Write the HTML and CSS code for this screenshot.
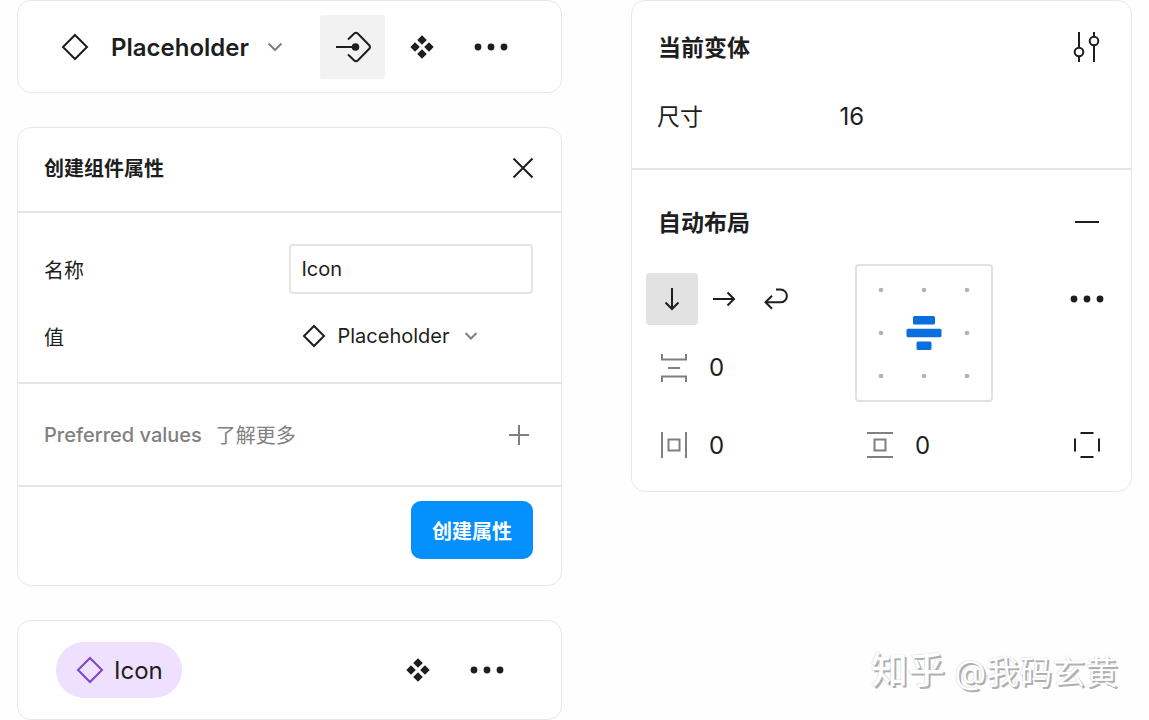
FILE: index.html
```html
<!DOCTYPE html>
<html lang="zh-CN">
<head>
    <title>创建组件属性</title>
    <meta charset="UTF-8">
    <link rel="stylesheet" href="styles.css">
</head>
<body>

    <div class="page">
        <div class="column">
            <div class="card toolbar">
                <svg class="icon" width="28" height="28" viewBox="0 0 28 28"><path d="M14 2 26 14 14 26 2 14z"/></svg>
                <select class="layer-name" aria-label="Layer">
                    <option>Placeholder</option>
                </select>
                <svg class="chevron" width="16" height="10" viewBox="0 0 16 10"><path d="M1.500 1.500 8 8 14.500 1.500"/></svg>
                <div class="tools">
                    <button class="tool active" aria-label="创建属性">
                        <svg class="icon" width="36" height="32" viewBox="0 0 36 32"><path d="M1 16h19"/><path d="M13 8.500 19 2.700q2-1.900 4 0L34 14q2 2 0 4L23 29.300q-2 1.900-4 0L13 23.500"/><circle class="fill" cx="20.500" cy="16" r="3.800"/></svg>
                    </button>
                    <button class="tool" aria-label="组件">
                        <svg class="solid" width="24" height="24" viewBox="0 0 24 24"><path d="M12 .3 16.800 5 12 9.800 7.200 5zM5 7.200 9.800 12 5 16.800.3 12zM19 7.200 23.700 12 19 16.800 14.200 12zM12 14.200 16.800 19 12 23.700 7.200 19z"/></svg>
                    </button>
                    <button class="tool" aria-label="更多">
                        <svg class="solid" width="34" height="8" viewBox="0 0 34 8"><circle cx="4" cy="4" r="3.400"/><circle cx="17" cy="4" r="3.400"/><circle cx="30" cy="4" r="3.400"/></svg>
                    </button>
                </div>
            </div>

            <div class="card dialog">
                <div class="dialog-header">
                    <h2>创建组件属性</h2>
                    <button class="small-button" aria-label="关闭">
                        <svg class="icon" width="22" height="22" viewBox="0 0 22 22"><path d="M1.500 1.500 20.500 20.500M20.500 1.500 1.500 20.500"/></svg>
                    </button>
                </div>
                <div class="dialog-form">
                    <label for="name">名称</label>
                    <input type="text" id="name" class="name-input" value="Icon">
                    <label for="value">值</label>
                    <div class="value-picker">
                        <svg class="icon" width="24" height="24" viewBox="0 0 24 24"><path d="M12 2 22 12 12 22 2 12z"/></svg>
                        <select id="value">
                            <option>Placeholder</option>
                        </select>
                        <svg class="chevron" width="14" height="10" viewBox="0 0 14 10"><path d="M1.500 2 7 7.500 12.500 2"/></svg>
                    </div>
                </div>
                <div class="preferred">
                    <span class="preferred-title">Preferred values</span>
                    <a href="#">了解更多</a>
                    <button class="small-button" aria-label="添加">
                        <svg class="icon muted" width="22" height="22" viewBox="0 0 22 22"><path d="M11 1v20M1 11h20"/></svg>
                    </button>
                </div>
                <div class="dialog-footer">
                    <button class="primary">创建属性</button>
                </div>
            </div>

            <div class="card instance">
                <button class="chip">
                    <svg class="icon" width="28" height="28" viewBox="0 0 28 28"><path d="M14 2 26 14 14 26 2 14z"/></svg>
                    Icon
                </button>
                <div class="tools">
                    <button class="tool" aria-label="组件">
                        <svg class="solid" width="24" height="24" viewBox="0 0 24 24"><path d="M12 .3 16.800 5 12 9.800 7.200 5zM5 7.200 9.800 12 5 16.800.3 12zM19 7.200 23.700 12 19 16.800 14.200 12zM12 14.200 16.800 19 12 23.700 7.200 19z"/></svg>
                    </button>
                    <button class="tool" aria-label="更多">
                        <svg class="solid" width="34" height="8" viewBox="0 0 34 8"><circle cx="4" cy="4" r="3.400"/><circle cx="17" cy="4" r="3.400"/><circle cx="30" cy="4" r="3.400"/></svg>
                    </button>
                </div>
            </div>
        </div>

        <div class="column">
            <div class="card inspector">
                <div class="variant">
                    <div class="section-header">
                        <h2>当前变体</h2>
                        <button class="cell-button" aria-label="设置">
                            <svg class="icon" width="28" height="32" viewBox="0 0 28 32"><path d="M6 1v15.500M6 25.500V31M21 1v4.500M21 14.500V31"/><circle cx="6" cy="21" r="4.300"/><circle cx="21" cy="10" r="4.300"/></svg>
                        </button>
                    </div>
                    <div class="size-row">
                        <label for="size">尺寸</label>
                        <select id="size">
                            <option>16</option>
                        </select>
                    </div>
                </div>
                <div class="auto-layout">
                    <div class="section-header">
                        <h2>自动布局</h2>
                        <button class="cell-button" aria-label="移除">
                            <svg class="icon" width="26" height="4" viewBox="0 0 26 4"><path d="M1 2h24"/></svg>
                        </button>
                    </div>
                    <div class="layout-grid">
                        <div class="directions">
                            <button class="cell-button selected" aria-label="垂直">
                                <svg class="icon" width="24" height="24" viewBox="0 0 24 24"><path d="M12 1v21M5.500 15.500 12 22l6.500-6.500"/></svg>
                            </button>
                            <button class="cell-button" aria-label="水平">
                                <svg class="icon" width="24" height="24" viewBox="0 0 24 24"><path d="M1 12h21M15.500 5.500 22 12l-6.500 6.500"/></svg>
                            </button>
                            <button class="cell-button" aria-label="换行">
                                <svg class="icon" width="24" height="24" viewBox="0 0 24 24"><path d="M12 2.500h4.500a6.300 6.300 0 0 1 0 12.800H1.500M8 8.800 1.500 15.300 8 21.800"/></svg>
                            </button>
                        </div>
                        <!-- alignment picker -->
                        <button class="matrix" aria-label="对齐">
                            <svg viewBox="0 0 134 134">
                                <g fill="#b3b3b3">
                                    <circle cx="24" cy="24" r="2.300"/><circle cx="67" cy="24" r="2.300"/><circle cx="110" cy="24" r="2.300"/>
                                    <circle cx="24" cy="67" r="2.300"/><circle cx="110" cy="67" r="2.300"/>
                                    <circle cx="24" cy="110" r="2.300"/><circle cx="67" cy="110" r="2.300"/><circle cx="110" cy="110" r="2.300"/>
                                </g>
                                <g fill="#0a6fdc">
                                    <rect x="56" y="50" width="22" height="8.500" rx="1.500"/>
                                    <rect x="49.500" y="62.700" width="35" height="8.500" rx="1.500"/>
                                    <rect x="59.500" y="75.500" width="15" height="8.500" rx="1.500"/>
                                </g>
                            </svg>
                        </button>
                        <button class="cell-button" aria-label="更多">
                            <svg class="solid" width="34" height="8" viewBox="0 0 34 8"><circle cx="4" cy="4" r="3.400"/><circle cx="17" cy="4" r="3.400"/><circle cx="30" cy="4" r="3.400"/></svg>
                        </button>
                        <div class="field first">
                            <label for="gap" aria-label="间距">
                                <svg class="icon muted" width="28" height="30" viewBox="0 0 28 30"><path d="M2 1v5.500h24V1M2 29v-5.500h24V29M8 15h12"/></svg>
                            </label>
                            <input type="text" id="gap" value="0">
                        </div>
                        <div class="field first">
                            <label for="padx" aria-label="水平内边距">
                                <svg class="icon muted" width="28" height="28" viewBox="0 0 28 28"><path d="M2 1v26M26 1v26M8.500 8.500h11v11h-11z"/></svg>
                            </label>
                            <input type="text" id="padx" value="0">
                        </div>
                        <div class="field">
                            <label for="pady" aria-label="垂直内边距">
                                <svg class="icon muted" width="28" height="28" viewBox="0 0 28 28"><path d="M1 2h26M1 26h26M8.500 8.500h11v11h-11z"/></svg>
                            </label>
                            <input type="text" id="pady" value="0">
                        </div>
                        <button class="cell-button" aria-label="独立内边距">
                            <svg class="icon" width="28" height="28" viewBox="0 0 28 28"><path d="M7.500 2h13M7.500 26h13M2 7.500v13M26 7.500v13"/></svg>
                        </button>
                    </div>
                </div>
            </div>
            <p class="credit"><span class="site">知乎</span> @我码玄黄</p>
        </div>
    </div>

</body>
</html>
```
FILE: styles.css
```css
* {
    box-sizing: border-box;
}
body {
    margin: 0;
    background: #fefefe;
    color: #1e1e1e;
    font-family: Inter, "Noto Sans CJK SC", sans-serif;
    font-size: 20px;
}
h2, p {
    margin: 0;
}
h2 {
    font-size: inherit;
    font-weight: 700;
}
button, input, select {
    font: inherit;
    color: inherit;
    background: none;
    border: none;
    padding: 0;
    margin: 0;
}
button {
    display: flex;
    align-items: center;
    justify-content: center;
    cursor: pointer;
}
select {
    appearance: none;
}
svg {
    display: block;
    flex: none;
}
.page {
    display: grid;
    grid-template-columns: 545fr 501fr;
    gap: 69px;
    padding: 0 17px;
}
.column {
    display: flex;
    flex-direction: column;
    gap: 34px;
}
.card {
    background: #fff;
    border: 1px solid #e8e8e8;
    border-radius: 14px;
}
.icon {
    fill: none;
    stroke: #1e1e1e;
    stroke-width: 2;
}
.icon .fill, .solid {
    fill: #1e1e1e;
    stroke: none;
}
.icon.muted {
    stroke: #808080;
}
.chevron {
    fill: none;
    stroke: #808080;
    stroke-width: 2;
}

/* top toolbar and instance row */
.toolbar, .instance {
    display: flex;
    align-items: center;
}
.toolbar {
    padding: 14px 38px 13px 43px;
}
.layer-name {
    font-size: 24px;
    font-weight: 600;
    margin: 0 18px 0 22px;
}
.tools {
    display: flex;
    gap: 4px;
    margin-left: auto;
}
.tool {
    width: 65px;
    height: 64px;
    border-radius: 3px;
}
.active {
    background: #f2f2f2;
}
.instance {
    padding: 17px 42px 17px 38px;
}
.chip {
    gap: 10px;
    height: 56px;
    padding: 0 19px 0 20px;
    border-radius: 28px;
    background: #eee0fe;
    font-size: 24px;
}
.chip .icon {
    stroke: #7b45cf;
}

/* property dialog */
.dialog-header, .dialog-form, .preferred {
    border-bottom: 2px solid #e5e5e5;
}
.dialog-header {
    display: flex;
    align-items: center;
    justify-content: space-between;
    height: 85px;
    padding: 0 27px 4px 26px;
}
.dialog-form {
    display: grid;
    grid-template-columns: 1fr 1fr;
    grid-template-rows: 50px 34px;
    row-gap: 25px;
    align-items: center;
    padding: 31px 28px 29px 26px;
}
.name-input {
    width: 100%;
    height: 50px;
    padding: 0 11px;
    border: 2px solid #e5e5e5;
    border-radius: 4px;
}
.value-picker {
    display: flex;
    align-items: center;
    padding-left: 13px;
}
.value-picker select {
    margin: 0 13px 0 12px;
}
.preferred {
    display: flex;
    align-items: center;
    gap: 14px;
    height: 103px;
    padding: 0 31px 0 26px;
    color: #808080;
}
.preferred-title {
    font-weight: 500;
}
.preferred a {
    color: inherit;
    text-decoration: none;
}
.preferred button {
    margin-left: auto;
}
.dialog-footer {
    display: flex;
    justify-content: flex-end;
    padding: 14px 28px 26px;
}
.primary {
    height: 58px;
    padding: 0 21px;
    border-radius: 10px;
    background: #0490fc;
    color: #fff;
    font-weight: 700;
}

/* inspector */
.inspector {
    font-size: 23px;
    padding-bottom: 3px;
}
.inspector h2, .size-row label {
    padding-bottom: 3px;
}
.variant {
    border-bottom: 2px solid #e5e5e5;
    padding: 10px 18px 18px 14px;
}
.section-header {
    display: flex;
    align-items: center;
    justify-content: space-between;
    height: 72px;
    padding-left: 12px;
}
.size-row {
    display: grid;
    grid-template-columns: 182fr 273fr;
    align-items: center;
    height: 67px;
    padding-left: 11px;
}
.inspector select, .inspector input {
    font-size: 24px;
    width: 60px;
}
.auto-layout {
    padding: 16px 18px 0 14px;
}
.auto-layout .section-header {
    margin-bottom: 6px;
}
.layout-grid {
    display: grid;
    grid-template-columns: 209fr 206fr 52px;
    grid-template-rows: 69px 69px 86px;
    align-items: center;
}
.directions {
    display: flex;
}
.cell-button {
    width: 52px;
    height: 52px;
    border-radius: 4px;
}
.selected {
    background: #e2e2e2;
}
.matrix {
    grid-row: span 2;
    width: 138px;
    height: 138px;
    border: 2px solid #e2e2e2;
    border-radius: 4px;
}
.matrix svg {
    width: 100%;
}
.field {
    display: flex;
    align-items: center;
    gap: 21px;
    padding-left: 11px;
}
.first {
    grid-column: 1;
    padding-left: 14px;
}

.credit {
    align-self: flex-end;
    margin: auto 14px 24px 0;
    font-size: 33px;
    line-height: 48px;
    color: #fff;
    text-shadow: 2px 2px 0 #b0b0b0, 0 0 1px #b0b0b0;
}
.site {
    font-size: 37px;
    font-weight: 500;
}
```
